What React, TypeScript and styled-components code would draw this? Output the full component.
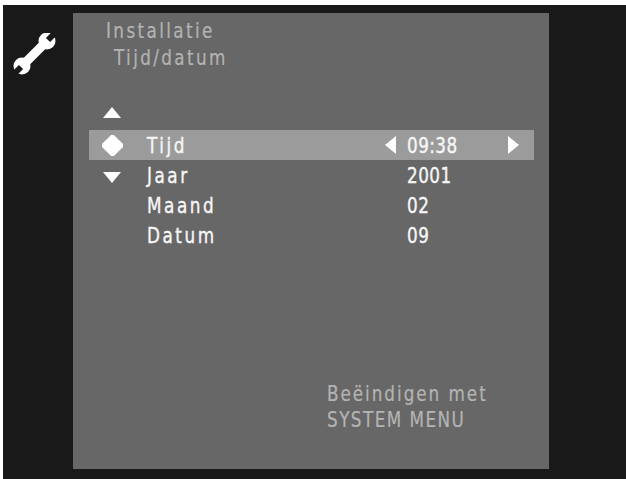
import React from "react";
import styled, { createGlobalStyle } from "styled-components";

const GlobalStyle = createGlobalStyle`
  html, body {
    margin: 0;
    padding: 0;
    background: #fff;
  }
`;

const Screen = styled.div`
  box-sizing: border-box;
  width: 623px;
  height: 474px;
  margin: 5px 0 0 3px;
  padding: 8px 77px 10px 70px;
  background: #191919;
  display: flex;
  font-family: "DejaVu Sans Condensed", "DejaVu Sans", sans-serif;
  font-stretch: condensed;
`;

const Panel = styled.main`
  position: relative;
  flex: 1;
  background: #676767;
  padding: 4px 15px 0 16px;
  display: flex;
  flex-direction: column;
`;

const WrenchIcon = styled.svg`
  position: absolute;
  left: -61px;
  top: 20px;
  width: 44px;
  height: 46px;
`;

/* the OSD font is narrower than anything installed, so squeeze it */
const Squeezed = styled.span<{ $spacing: number }>`
  display: inline-block;
  white-space: nowrap;
  letter-spacing: ${({ $spacing }) => $spacing}px;
  transform: scaleX(0.85);
  transform-origin: left center;
`;

const Heading = styled.div<{ $indent?: number }>`
  height: 27px;
  line-height: 27px;
  font-size: 22px;
  color: #b4b4b4;
  -webkit-text-stroke: 0.2px #b4b4b4;
  padding-left: ${({ $indent }) => $indent ?? 0}px;
`;

const Headings = styled.header`
  padding-left: 17px;
`;

const UpArrow = styled.div`
  box-sizing: border-box;
  height: 59px;
  padding: 0 0 12px 14px;
  display: flex;
  align-items: flex-end;
`;

const Rows = styled.div`
  display: flex;
  flex-direction: column;
`;

const Row = styled.div<{ $active?: boolean }>`
  display: grid;
  grid-template-columns: 56px 262px 1fr;
  align-items: center;
  height: 30px;
  background: ${({ $active }) => ($active ? "#9b9b9b" : "transparent")};
  color: #f6f6f6;
  -webkit-text-stroke: 0.4px #f6f6f6;
  font-size: 22px;
`;

const Mark = styled.span`
  display: flex;
  justify-content: center;
  padding-right: 10px;
`;

const Label = styled.span`
  padding-left: 2px;
`;

const Value = styled.span`
  display: flex;
  align-items: center;
`;

const ValueText = styled.span`
  width: 101px;
`;

const SideArrow = styled.svg`
  width: 11px;
  height: 18px;
  margin-right: 11px;
  margin-left: -22px;
  fill: #fff;
`;

const RightArrow = styled(SideArrow)`
  margin: 0;
`;

const Triangle = styled.svg`
  width: 18px;
  height: 11px;
  fill: #fff;
`;

const DownTriangle = styled(Triangle)`
  margin-top: 4px;
`;

const Diamond = styled.svg`
  width: 21px;
  height: 21px;
  fill: #fff;
`;

const Footer = styled.footer`
  margin-top: 131px;
  padding-left: 238px;
  color: #b4b4b4;
  -webkit-text-stroke: 0.2px #b4b4b4;
  font-size: 22px;
  line-height: 26px;
`;

const FooterLine = styled.div`
  height: 26px;
`;

const rows = [
  { label: "Tijd", value: "09:38", active: true },
  { label: "Jaar", value: "2001" },
  { label: "Maand", value: "02" },
  { label: "Datum", value: "09" },
];

export default function App() {
  return (
    <>
      <GlobalStyle />
      <Screen>
        <Panel>
          <WrenchIcon viewBox="0 0 44 46">
            <circle cx="35" cy="8" r="8.500" fill="#fff" />
            <circle cx="10" cy="33" r="8.500" fill="#fff" />
            <line x1="10" y1="33" x2="35" y2="8" stroke="#fff" strokeWidth="9" />
            <polygon points="38.100,9.100 33.900,4.900 42.400,-3.600 46.600,0.600" fill="#191919" />
            <polygon points="11.100,36.100 6.900,31.900 -1.600,40.400 2.600,44.600" fill="#191919" />
          </WrenchIcon>
          <Headings>
            <Heading>
              <Squeezed $spacing={2.8}>Installatie</Squeezed>
            </Heading>
            <Heading $indent={8}>
              <Squeezed $spacing={2.8}>Tijd/datum</Squeezed>
            </Heading>
          </Headings>
          <UpArrow>
            <Triangle viewBox="0 0 18 11">
              <polygon points="9,0 18,11 0,11" />
            </Triangle>
          </UpArrow>
          <Rows>
            {rows.map((row, i) => (
              <Row key={row.label} $active={row.active}>
                <Mark>
                  {i === 0 && (
                    <Diamond viewBox="0 0 22 22">
                      <polygon points="9.500,0 12.500,0 22,9.500 22,12.500 12.500,22 9.500,22 0,12.500 0,9.500" />
                    </Diamond>
                  )}
                  {i === 1 && (
                    <DownTriangle viewBox="0 0 18 11">
                      <polygon points="0,0 18,0 9,11" />
                    </DownTriangle>
                  )}
                </Mark>
                <Label>
                  <Squeezed $spacing={3}>{row.label}</Squeezed>
                </Label>
                <Value>
                  {row.active && (
                    <SideArrow viewBox="0 0 11 18">
                      <polygon points="11,0 11,18 0,9" />
                    </SideArrow>
                  )}
                  <ValueText>
                    <Squeezed $spacing={0.5}>{row.value}</Squeezed>
                  </ValueText>
                  {row.active && (
                    <RightArrow viewBox="0 0 11 18">
                      <polygon points="0,0 11,9 0,18" />
                    </RightArrow>
                  )}
                </Value>
              </Row>
            ))}
          </Rows>
          <Footer>
            <FooterLine>
              <Squeezed $spacing={2.3}>Beëindigen met</Squeezed>
            </FooterLine>
            <FooterLine>
              <Squeezed $spacing={1.7}>SYSTEM MENU</Squeezed>
            </FooterLine>
          </Footer>
        </Panel>
      </Screen>
    </>
  );
}
